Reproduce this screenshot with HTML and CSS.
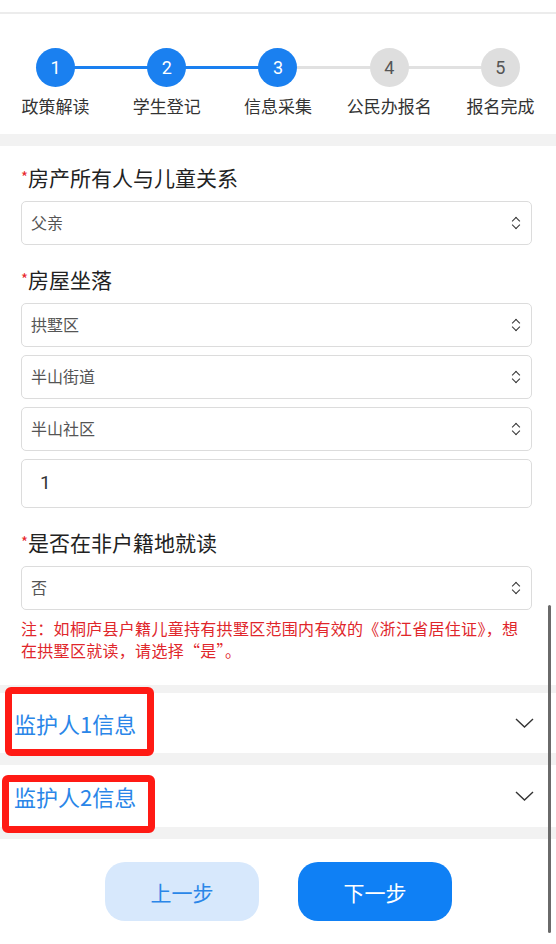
FILE: index.html
```html
<!DOCTYPE html>
<html lang="zh-CN">
<head>
  <meta charset="UTF-8">
  <meta name="viewport" content="width=device-width, initial-scale=1.0">
  <title>信息采集</title>
  <link rel="stylesheet" href="styles.css">
</head>
<body>
  <div class="page">
    <div class="topbar"></div>

    <div class="steps">
      <div class="step done"><span class="num">1</span><span class="name">政策解读</span></div>
      <div class="step done"><span class="num">2</span><span class="name">学生登记</span></div>
      <div class="step done"><span class="num">3</span><span class="name">信息采集</span></div>
      <div class="step"><span class="num">4</span><span class="name">公民办报名</span></div>
      <div class="step"><span class="num">5</span><span class="name">报名完成</span></div>
    </div>

    <div class="band"></div>

    <div class="form">
      <div class="field-label"><i>*</i>房产所有人与儿童关系</div>
      <div class="select">父亲<span class="updown"></span></div>

      <div class="field-label"><i>*</i>房屋坐落</div>
      <div class="select">拱墅区<span class="updown"></span></div>
      <div class="select">半山街道<span class="updown"></span></div>
      <div class="select">半山社区<span class="updown"></span></div>
      <div class="text-input">1</div>

      <div class="field-label"><i>*</i>是否在非户籍地就读</div>
      <div class="select">否<span class="updown"></span></div>
      <p class="note">注：如桐庐县户籍儿童持有拱墅区范围内有效的《浙江省居住证》，想在拱墅区就读，请选择“是”。</p>
    </div>

    <div class="band thin"></div>
    <div class="panel first">
      <span class="panel-title">监护人1信息</span>
      <svg class="chev" width="19" height="10" viewBox="0 0 19 10"><path d="M1 1 L9.5 9 L18 1" fill="none" stroke="#333" stroke-width="1.4"/></svg>
      <div class="mark mark-1"></div>
    </div>
    <div class="band"></div>
    <div class="panel second">
      <span class="panel-title">监护人2信息</span>
      <svg class="chev" width="19" height="10" viewBox="0 0 19 10"><path d="M1 1 L9.5 9 L18 1" fill="none" stroke="#333" stroke-width="1.4"/></svg>
      <div class="mark mark-2"></div>
    </div>
    <div class="band"></div>

    <div class="actions">
      <button class="btn prev">上一步</button>
      <button class="btn next">下一步</button>
    </div>

    <div class="scroll-thumb"></div>
  </div>
</body>
</html>
```

FILE: styles.css
```css
body {
  margin: 0;
  font-family: "Noto Sans CJK SC", "Noto Sans", sans-serif;
  background: #ffffff;
  color: #222;
}
.page {
  position: relative;
  width: 556px;
  min-height: 944px;
  overflow: hidden;
}
.topbar {
  height: 12px;
  border-bottom: 2px solid #ececec;
}

/* steps */
.steps {
  display: grid;
  grid-template-columns: repeat(5, 1fr);
  padding: 34px 0 17px;
}
.step {
  position: relative;
  display: flex;
  flex-direction: column;
  align-items: center;
}
.step + .step::before {
  content: "";
  position: absolute;
  left: -50%;
  right: 50%;
  top: 18px;
  height: 3px;
  background: #e1e1e1;
}
.step.done + .step.done::before {
  background: #1a80f0;
}
.num {
  position: relative;
  z-index: 1;
  width: 39px;
  height: 39px;
  border-radius: 50%;
  background: #dedede;
  color: #555;
  font-family: Roboto, "Liberation Sans", sans-serif;
  font-size: 18px;
  line-height: 39px;
  text-align: center;
}
.step.done .num {
  background: #1a80f0;
  color: #ffffff;
}
.name {
  margin-top: 8px;
  font-size: 17px;
  line-height: 22px;
  color: #333;
}

.band {
  height: 12px;
  background: #f2f2f2;
}
.band.thin {
  height: 8px;
}

/* form */
.form {
  padding: 17px 24px 24px 21px;
}
.field-label {
  font-size: 21px;
  line-height: 28px;
  color: #222;
  margin-bottom: 10px;
}
.field-label i {
  font-style: normal;
  color: #e8262b;
  font-size: 15px;
  vertical-align: 3px;
}
.select + .field-label,
.text-input + .field-label {
  margin-top: 20px;
}
.select,
.text-input {
  position: relative;
  box-sizing: border-box;
  height: 44px;
  border: 1.5px solid #dcdcdc;
  border-radius: 5px;
  padding-left: 9px;
  font-size: 16px;
  line-height: 41px;
  color: #555;
}
.select + .select,
.select + .text-input {
  margin-top: 8px;
}
.text-input {
  height: 49px;
  line-height: 46px;
  padding-left: 18px;
  font-family: Roboto, "Liberation Sans", sans-serif;
  font-size: 19px;
  color: #333;
}
.updown {
  position: absolute;
  right: 10px;
  top: 50%;
  width: 10px;
  height: 12px;
  margin-top: -6px;
}
.updown::before,
.updown::after {
  content: "";
  position: absolute;
  left: 2px;
  width: 5px;
  height: 5px;
  border-left: 1.6px solid #333;
  border-top: 1.6px solid #333;
}
.updown::before {
  top: 1px;
  transform: rotate(45deg);
}
.updown::after {
  bottom: 1px;
  transform: rotate(-135deg);
}
.note {
  margin: 7px 0 0;
  font-size: 16px;
  line-height: 22px;
  letter-spacing: 0.3px;
  color: #e0262b;
}

/* guardian panels */
.panel {
  position: relative;
  display: flex;
  align-items: center;
  justify-content: space-between;
  height: 60px;
  padding: 0 22px 0 14px;
}
.panel.second {
  height: 62px;
}
.panel-title {
  font-size: 22px;
  color: #2a86e8;
}
.chev {
  display: block;
}
.mark {
  position: absolute;
  border: 7px solid #ff1a14;
  border-radius: 6px;
  box-sizing: border-box;
}
.mark-1 {
  left: 5px;
  top: -6px;
  width: 149px;
  height: 69px;
}
.mark-2 {
  left: 2px;
  top: 10px;
  width: 153px;
  height: 58px;
}

/* footer buttons */
.actions {
  display: flex;
  gap: 39px;
  padding: 23px 0 0 105px;
}
.btn {
  width: 154px;
  height: 59px;
  border: none;
  border-radius: 20px;
  font-family: inherit;
  font-size: 21px;
  cursor: pointer;
}
.btn.prev {
  background: #d7e8fc;
  color: #2a86e8;
}
.btn.next {
  background: #0f80f5;
  color: #ffffff;
}

.scroll-thumb {
  position: absolute;
  left: 548px;
  top: 605px;
  width: 3px;
  height: 328px;
  border-radius: 2px;
  background: #6a6a6a;
}
```
